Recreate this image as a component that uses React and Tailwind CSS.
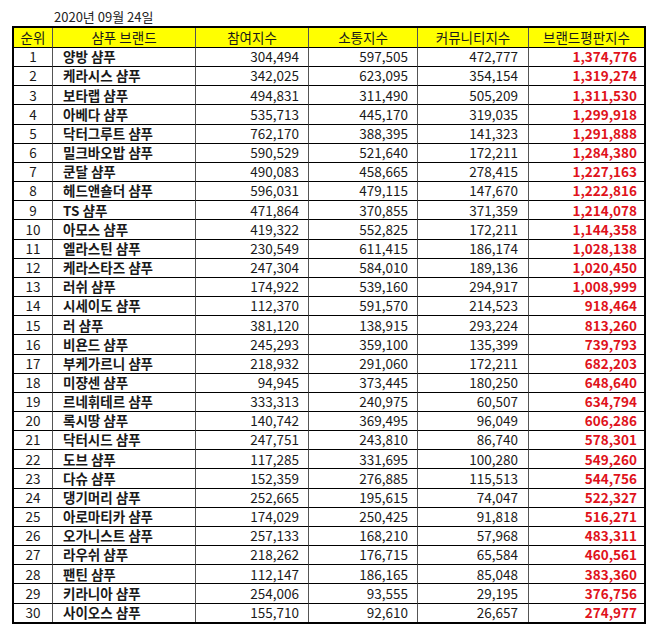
import React from "react";

const rows = [
  [1, "양방 샴푸", "304,494", "597,505", "472,777", "1,374,776"],
  [2, "케라시스 샴푸", "342,025", "623,095", "354,154", "1,319,274"],
  [3, "보타랩 샴푸", "494,831", "311,490", "505,209", "1,311,530"],
  [4, "아베다 샴푸", "535,713", "445,170", "319,035", "1,299,918"],
  [5, "닥터그루트 샴푸", "762,170", "388,395", "141,323", "1,291,888"],
  [6, "밀크바오밥 샴푸", "590,529", "521,640", "172,211", "1,284,380"],
  [7, "쿤달 샴푸", "490,083", "458,665", "278,415", "1,227,163"],
  [8, "헤드앤숄더 샴푸", "596,031", "479,115", "147,670", "1,222,816"],
  [9, "TS 샴푸", "471,864", "370,855", "371,359", "1,214,078"],
  [10, "아모스 샴푸", "419,322", "552,825", "172,211", "1,144,358"],
  [11, "엘라스틴 샴푸", "230,549", "611,415", "186,174", "1,028,138"],
  [12, "케라스타즈 샴푸", "247,304", "584,010", "189,136", "1,020,450"],
  [13, "러쉬 샴푸", "174,922", "539,160", "294,917", "1,008,999"],
  [14, "시세이도 샴푸", "112,370", "591,570", "214,523", "918,464"],
  [15, "러 샴푸", "381,120", "138,915", "293,224", "813,260"],
  [16, "비욘드 샴푸", "245,293", "359,100", "135,399", "739,793"],
  [17, "부케가르니 샴푸", "218,932", "291,060", "172,211", "682,203"],
  [18, "미쟝센 샴푸", "94,945", "373,445", "180,250", "648,640"],
  [19, "르네휘테르 샴푸", "333,313", "240,975", "60,507", "634,794"],
  [20, "록시땅 샴푸", "140,742", "369,495", "96,049", "606,286"],
  [21, "닥터시드 샴푸", "247,751", "243,810", "86,740", "578,301"],
  [22, "도브 샴푸", "117,285", "331,695", "100,280", "549,260"],
  [23, "다슈 샴푸", "152,359", "276,885", "115,513", "544,756"],
  [24, "댕기머리 샴푸", "252,665", "195,615", "74,047", "522,327"],
  [25, "아로마티카 샴푸", "174,029", "250,425", "91,818", "516,271"],
  [26, "오가니스트 샴푸", "257,133", "168,210", "57,968", "483,311"],
  [27, "라우쉬 샴푸", "218,262", "176,715", "65,584", "460,561"],
  [28, "팬틴 샴푸", "112,147", "186,165", "85,048", "383,360"],
  [29, "키라니아 샴푸", "254,006", "93,555", "29,195", "376,756"],
  [30, "사이오스 샴푸", "155,710", "92,610", "26,657", "274,977"],
];

const headers = ["순위", "샴푸 브랜드", "참여지수", "소통지수", "커뮤니티지수", "브랜드평판지수"];

export default function App() {
  return (
    <div
      className="w-[660px] h-[635px] bg-white text-[#1a1a1a]"
      style={{ fontFamily: '"Noto Sans CJK KR", "Noto Sans", sans-serif' }}
    >
      <div className="pl-[54px] pt-[9px] h-[26px] text-[13px] leading-[16px] text-[#222]">
        2020년 09월 24일
      </div>
      <div className="ml-[12px] w-[634px] border-2 border-black grid grid-cols-[38px_143px_113px_109px_111px_116px] text-[13.5px]">
        {headers.map((h, i) => (
          <div
            key={h}
            className={`h-[19px] bg-[#ffff00] flex items-center justify-center leading-none ${
              i > 0 ? "border-l border-[#555]" : ""
            }`}
          >
            {h}
          </div>
        ))}
        {rows.map((r) => (
          <React.Fragment key={r[0]}>
            <div className="h-[19.17px] border-t border-black flex items-center justify-center leading-none">
              {r[0]}
            </div>
            <div className="h-[19.17px] border-t border-l border-t-black border-l-[#555] flex items-center pl-[10px] font-bold leading-none">
              {r[1]}
            </div>
            <div className="h-[19.17px] border-t border-l border-t-black border-l-[#555] flex items-center justify-end pr-[9px] leading-none">
              {r[2]}
            </div>
            <div className="h-[19.17px] border-t border-l border-t-black border-l-[#555] flex items-center justify-end pr-[9px] leading-none">
              {r[3]}
            </div>
            <div className="h-[19.17px] border-t border-l border-t-black border-l-[#555] flex items-center justify-end pr-[10px] leading-none">
              {r[4]}
            </div>
            <div className="h-[19.17px] border-t border-l border-t-black border-l-[#555] flex items-center justify-end pr-[7px] font-bold text-[#e0121b] leading-none">
              {r[5]}
            </div>
          </React.Fragment>
        ))}
      </div>
    </div>
  );
}
